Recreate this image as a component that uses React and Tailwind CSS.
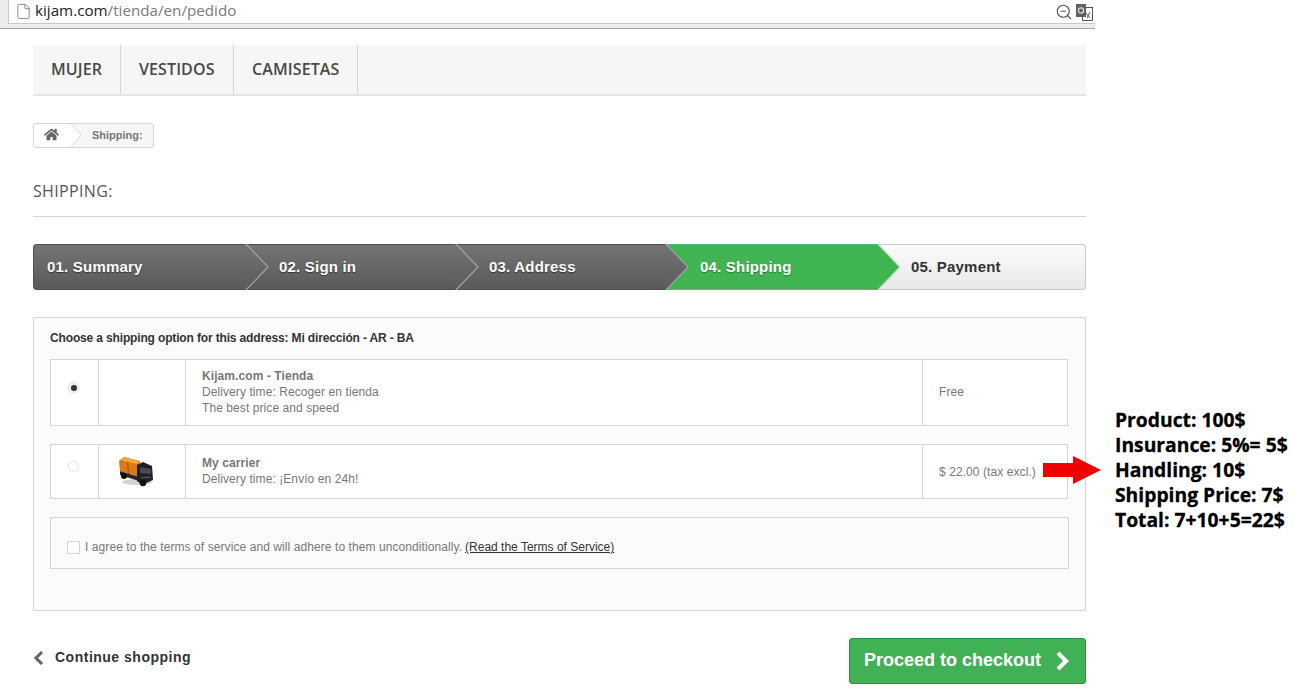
import React from "react";
import { File, ZoomOut } from "lucide-react";
import { FaHome } from "react-icons/fa";

const steps = [
  { label: "01. Summary", kind: "done", box: "w-[212px] rounded-l-[4px] border-l pl-[13px]" },
  { label: "02. Sign in", kind: "done", box: "w-[210px] pl-[34px]" },
  { label: "03. Address", kind: "done", box: "w-[210px] pl-[34px]" },
  { label: "04. Shipping", kind: "current", box: "w-[212px] pl-[35px]" },
  { label: "05. Payment", kind: "todo", box: "flex-1 rounded-r-[4px] pl-[34px]" },
];

// Gradient, border and text per step state
const stepStyles = {
  done: "bg-gradient-to-b from-[#747474] to-[#5a5a5a] border-y border-[#4f4f4f] text-white [text-shadow:0_1px_1px_#333]",
  current: "bg-[#40b353] border-y border-[#57bd68] text-white [text-shadow:0_1px_1px_#2a7a38]",
  todo: "bg-gradient-to-b from-[#fbfbfb] to-[#e9e9e9] border-y border-r border-[#c9c9c9] text-[#333]",
};

// Arrow point that hangs over the next step
const StepArrow = ({ kind }) => (
  <svg
    className="absolute left-full -top-px z-10"
    width="24"
    height="46"
    viewBox="0 0 24 46"
  >
    <defs>
      <linearGradient id="doneFill" x1="0" y1="0" x2="0" y2="1">
        <stop offset="0" stopColor="#747474" />
        <stop offset="1" stopColor="#5a5a5a" />
      </linearGradient>
    </defs>
    <path
      d="M0 0 L1 0 L23 23 L1 46 L0 46 Z"
      fill={kind === "done" ? "url(#doneFill)" : "#40b353"}
    />
    <path
      d="M1 0 L23 23 L1 46"
      fill="none"
      stroke={kind === "done" ? "#a3a3a3" : "#c4e5ca"}
      strokeWidth="1.2"
    />
  </svg>
);

const Truck = () => (
  <svg width="36" height="32" viewBox="0 0 36 32">
    <ellipse cx="19" cy="27" rx="15" ry="3" fill="#d4d4d4" />
    <path d="M1 6 L6 2 L22 6 L21 22 L2 16 Z" fill="#d9791a" />
    <path d="M6 2 L22 6 L19 9 L2 5 Z" fill="#f2a63c" />
    <path d="M9 7 L10 19 L11 19 L10 7 Z" fill="#9a560f" />
    <path d="M2 16 L21 22 L21 26 L2 20 Z" fill="#262626" />
    <path d="M19 10 L25 7 L34 11 L35 25 L24 30 L19 26 Z" fill="#1f1f25" />
    <path d="M22 12 L33 14 L33 19 L22 18 Z" fill="#4a4a58" />
    <path d="M23 23 L33 22" stroke="#666" strokeWidth="1" />
    <circle cx="6" cy="21" r="3" fill="#0e0e0e" />
    <circle cx="25" cy="28" r="3.2" fill="#0e0e0e" />
  </svg>
);

const TranslateIcon = () => (
  <svg width="17" height="18" viewBox="0 0 17 18">
    <rect x="6.5" y="4.5" width="10" height="13" fill="#fff" stroke="#555" />
    <path d="M9 9 L14 15 M14 9 L11 15" stroke="#555" strokeWidth="1" />
    <rect x="0" y="1" width="10" height="13" fill="#5f5f5f" />
    <circle cx="5" cy="7.5" r="2.6" fill="none" stroke="#ddd" strokeWidth="1.3" />
  </svg>
);

export default function App() {
  return (
    <div className="relative flex h-[694px] w-[1295px] overflow-hidden bg-white font-['Liberation_Sans',sans-serif]">
      {/* Screenshot of the shop */}
      <div className="w-[1095px] shrink-0">
        {/* Browser address bar */}
        <div className="h-[29px] border-b border-[#a3a3a3] bg-[#ececec] pl-2">
          <div className="flex h-[24px] items-center border-b border-l border-[#c9c9c9] bg-white pl-[6px] pr-[2px]">
            <File size={17} strokeWidth={1.2} className="text-[#777]" />
            <span className="mb-[2px] ml-[3px] font-['Open_Sans',sans-serif] text-[15.2px] leading-none text-[#7a7a7a]">
              <span className="text-[#222]">kijam.com</span>/tienda/en/pedido
            </span>
            <ZoomOut size={18} strokeWidth={1.5} className="ml-auto mr-[3px] text-[#555]" />
            <TranslateIcon />
          </div>
        </div>

        <div className="ml-[33px] w-[1053px]">
          {/* Top menu */}
          <nav className="mt-4 flex h-[51px] border-b-2 border-[#e5e5e5] bg-[#f6f6f6] font-['Open_Sans',sans-serif] text-[16px] font-semibold tracking-[0.1px] text-[#484848]">
            <a className="flex w-[88px] items-center border-r border-[#d6d4d4] pb-[1px] pl-[18px]">MUJER</a>
            <a className="flex w-[113px] items-center border-r border-[#d6d4d4] pb-[1px] pl-[18px]">VESTIDOS</a>
            <a className="flex w-[124px] items-center border-r border-[#d6d4d4] pb-[1px] pl-[18px]">CAMISETAS</a>
          </nav>

          {/* Breadcrumb */}
          <div className="relative mt-[27px] flex h-[25px] w-[121px] items-center overflow-hidden rounded-[3px] border border-[#d6d4d4] bg-[#f6f6f6] text-[11px] font-bold text-[#777]">
            <div className="flex h-full w-[36px] items-center justify-center bg-white pb-[3px] pr-[1px]">
              <FaHome size={15} className="text-[#666]" />
            </div>
            <svg className="shrink-0" width="11" height="25" viewBox="0 0 11 25">
              <path d="M0 0 L11 12 L0 25 Z" fill="#fff" />
              <path d="M0 0 L11 12 L0 25" fill="none" stroke="#dcdcdc" />
            </svg>
            <span className="ml-[11px]">Shipping:</span>
          </div>

          {/* Page heading */}
          <h1 className="mt-[32px] border-b border-[#d6d4d4] pb-[13px] font-['Open_Sans',sans-serif] text-[16px] leading-[23px] tracking-[0.35px] text-[#555]">
            SHIPPING:
          </h1>

          {/* Checkout steps */}
          <ul className="mt-[27px] flex h-[46px] text-[15px] font-bold tracking-[0.2px]">
            {steps.map((step) => (
              <li
                key={step.label}
                className={`relative flex items-center ${step.box} ${stepStyles[step.kind]}`}
              >
                {step.label}
                {step.kind !== "todo" && <StepArrow kind={step.kind} />}
              </li>
            ))}
          </ul>

          {/* Shipping options */}
          <div className="mt-[27px] h-[294px] border border-[#d6d4d4] bg-[#fbfbfb] pl-4 pr-[17px] pt-[11px] text-[12px] leading-4 tracking-[0.08px] text-[#777]">
            <p className="h-[19px] font-bold leading-[18px] tracking-[-0.15px] text-[#333]">
              Choose a shipping option for this address: Mi dirección - AR - BA
            </p>
            <div className="mt-[11px] flex h-[67px] border border-[#d6d4d4] bg-white">
              <div className="flex w-[48px] items-center justify-center border-r border-[#d6d4d4] pb-[10px] pr-[2px]">
                <span className="flex h-[13px] w-[13px] items-center justify-center rounded-full bg-[#eeeeee]">
                  <span className="h-[6px] w-[6px] rounded-full bg-[#333]" />
                </span>
              </div>
              <div className="w-[87px] border-r border-[#d6d4d4]" />
              <div className="flex flex-1 flex-col justify-center border-r border-[#d6d4d4] pb-[2px] pl-4">
                <strong>Kijam.com - Tienda</strong>
                <span>Delivery time: Recoger en tienda</span>
                <span>The best price and speed</span>
              </div>
              <div className="flex w-[144px] items-center pb-[2px] pl-4">Free</div>
            </div>

            <div className="mt-[18px] flex h-[55px] border border-[#d6d4d4] bg-white">
              <div className="flex w-[48px] items-center justify-center border-r border-[#d6d4d4] pb-[10px] pr-[2px]">
                <span className="h-[11px] w-[11px] rounded-full border border-[#e2e2e2] bg-white" />
              </div>
              <div className="flex w-[87px] items-center justify-center border-r border-[#d6d4d4] pb-[2px] pr-[13px]">
                <Truck />
              </div>
              <div className="flex flex-1 flex-col justify-center border-r border-[#d6d4d4] pb-[2px] pl-4">
                <strong>My carrier</strong>
                <span>Delivery time: ¡Envío en 24h!</span>
              </div>
              <div className="flex w-[144px] items-center pl-4">$ 22.00 (tax excl.)</div>
            </div>

            <div className="-mr-px mt-[18px] flex h-[52px] items-center border border-[#d6d4d4] pl-4 pt-[8px]">
              <span className="h-[13px] w-[13px] border border-[#d6d4d4] bg-white" />
              <span className="ml-[5px]">I agree to the terms of service and will adhere to them unconditionally.</span>
              <a className="ml-[3px] tracking-normal text-[#333] underline">(Read the Terms of Service)</a>
            </div>
          </div>

          {/* Footer buttons */}
          <div className="mt-[27px] flex items-start justify-between">
            <a className="mt-[9px] flex items-center text-[14px] font-bold tracking-[0.5px] text-[#333]">
              <svg width="11" height="14" viewBox="0 0 11 14">
                <path d="M9 1 L3 7 L9 13" fill="none" stroke="#666" strokeWidth="3" />
              </svg>
              <span className="ml-[11px]">Continue shopping</span>
            </a>
            <button className="flex h-[46px] w-[237px] items-center rounded-[3px] border border-[#2f8f41] bg-[#41b155] pb-[2px] pl-[14px] text-[18px] font-bold text-white">
              Proceed to checkout
              <svg className="ml-[13px] mt-[2px]" width="16" height="20" viewBox="0 0 16 20">
                <path d="M4 2 L12 10 L4 18" fill="none" stroke="#fff" strokeWidth="4.2" />
              </svg>
            </button>
          </div>
        </div>
      </div>

      {/* Note added on the screenshot */}
      <div className="ml-5 mt-[407px] whitespace-nowrap font-['Open_Sans',sans-serif] text-[19.3px] font-bold leading-[25px] text-black [-webkit-text-stroke:0.3px_black]">
        <p>Product: 100$</p>
        <p>Insurance: 5%= 5$</p>
        <p>Handling: 10$</p>
        <p>Shipping Price: 7$</p>
        <p>Total: 7+10+5=22$</p>
      </div>
      <svg className="absolute left-[1041px] top-[456px]" width="60" height="28" viewBox="0 0 60 28">
        <path d="M2 7 H32 V0 L60 14 L32 28 V21 H2 Z" fill="#f00000" />
      </svg>
    </div>
  );
}
